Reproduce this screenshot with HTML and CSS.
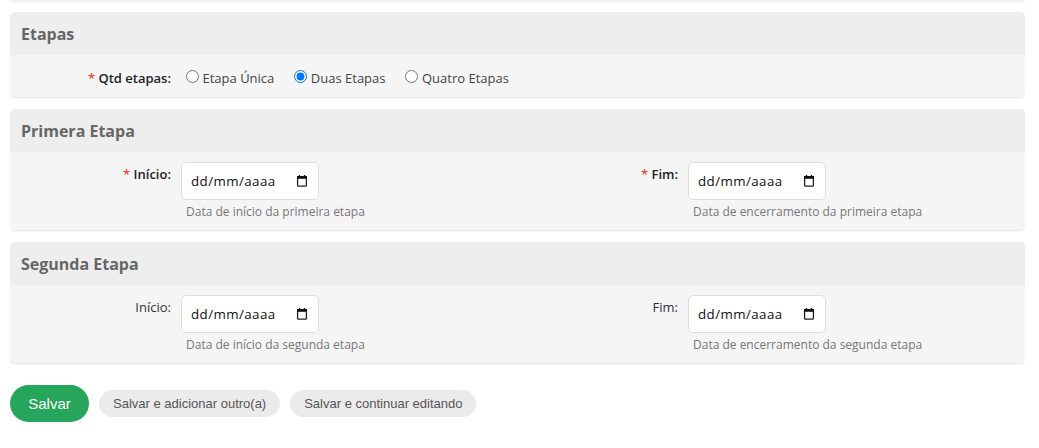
FILE: index.html
```html
<!DOCTYPE html>
<html lang="pt-BR">
<head>
<meta charset="utf-8">
<title>Etapas</title>
<link rel="stylesheet" href="styles.css">
</head>
<body>
<div class="sliver"></div>

<section class="card">
  <h2 class="card-title">Etapas</h2>
  <div class="card-body radio-body">
    <div class="field-label radio-label"><span class="req">*</span> <b>Qtd etapas:</b></div>
    <div class="radios">
      <label class="radio"><input type="radio" name="qtd">Etapa Única</label>
      <label class="radio"><input type="radio" name="qtd" checked>Duas Etapas</label>
      <label class="radio"><input type="radio" name="qtd">Quatro Etapas</label>
    </div>
  </div>
</section>

<section class="card">
  <h2 class="card-title">Primera Etapa</h2>
  <div class="card-body date-grid">
    <div class="field">
      <div class="field-label"><span class="req">*</span> <b>Início:</b></div>
      <div class="control">
        <div class="date-input"><span>dd/mm/aaaa</span><svg class="cal" viewBox="0 0 12 12" width="12" height="12"><path d="M3.5 0v2M8.5 0v2" stroke="#111" stroke-width="1.3" fill="none"/><rect x="1.6" y="1.6" width="8.8" height="9.6" rx="0.8" stroke="#222" stroke-width="1.3" fill="none"/><rect x="1" y="1" width="10" height="2.8" fill="#111"/></svg></div>
        <div class="help">Data de início da primeira etapa</div>
      </div>
    </div>
    <div class="field">
      <div class="field-label"><span class="req">*</span> <b>Fim:</b></div>
      <div class="control">
        <div class="date-input"><span>dd/mm/aaaa</span><svg class="cal" viewBox="0 0 12 12" width="12" height="12"><path d="M3.5 0v2M8.5 0v2" stroke="#111" stroke-width="1.3" fill="none"/><rect x="1.6" y="1.6" width="8.8" height="9.6" rx="0.8" stroke="#222" stroke-width="1.3" fill="none"/><rect x="1" y="1" width="10" height="2.8" fill="#111"/></svg></div>
        <div class="help">Data de encerramento da primeira etapa</div>
      </div>
    </div>
  </div>
</section>

<section class="card">
  <h2 class="card-title">Segunda Etapa</h2>
  <div class="card-body date-grid">
    <div class="field">
      <div class="field-label">Início:</div>
      <div class="control">
        <div class="date-input"><span>dd/mm/aaaa</span><svg class="cal" viewBox="0 0 12 12" width="12" height="12"><path d="M3.5 0v2M8.5 0v2" stroke="#111" stroke-width="1.3" fill="none"/><rect x="1.6" y="1.6" width="8.8" height="9.6" rx="0.8" stroke="#222" stroke-width="1.3" fill="none"/><rect x="1" y="1" width="10" height="2.8" fill="#111"/></svg></div>
        <div class="help">Data de início da segunda etapa</div>
      </div>
    </div>
    <div class="field">
      <div class="field-label">Fim:</div>
      <div class="control">
        <div class="date-input"><span>dd/mm/aaaa</span><svg class="cal" viewBox="0 0 12 12" width="12" height="12"><path d="M3.5 0v2M8.5 0v2" stroke="#111" stroke-width="1.3" fill="none"/><rect x="1.6" y="1.6" width="8.8" height="9.6" rx="0.8" stroke="#222" stroke-width="1.3" fill="none"/><rect x="1" y="1" width="10" height="2.8" fill="#111"/></svg></div>
        <div class="help">Data de encerramento da segunda etapa</div>
      </div>
    </div>
  </div>
</section>

<div class="actions">
  <button class="btn-primary" type="button">Salvar</button>
  <button class="btn-secondary" type="button">Salvar e adicionar outro(a)</button>
  <button class="btn-secondary" type="button">Salvar e continuar editando</button>
</div>
</body>
</html>
```

FILE: styles.css
```css
* { box-sizing: border-box; }
html, body { margin: 0; background: #fff; }
body {
  padding: 0 14px 0 10px;
  font-family: "Open Sans", "Noto Sans", sans-serif;
  font-size: 13px;
  color: #333;
  height: 448px;
  overflow: hidden;
}
.sliver {
  height: 2px;
  background: #f4f4f4;
  border-radius: 0 0 4px 4px;
  box-shadow: 0 1px 1px rgba(0, 0, 0, 0.04);
  margin-bottom: 10px;
}
.card {
  background: #f5f5f5;
  border-radius: 5px;
  border-bottom: 1px solid #ececec;
  box-shadow: 0 1px 1px rgba(0, 0, 0, 0.04);
  margin-bottom: 11px;
  overflow: hidden;
}
.card-title {
  margin: 0;
  height: 43px;
  padding: 0 11px;
  background: #eeeeee;
  font-size: 16px;
  font-weight: 700;
  line-height: 45px;
  color: #666;
}
.card-body { padding: 10px 0 0; }
.radio-body { display: flex; height: 42px; }
.field-label {
  width: 161px;
  text-align: right;
  padding-top: 3px;
  line-height: 18px;
  color: #333;
  flex: none;
}
.field-label b { font-weight: 600; color: #222; }
.radio-label { padding-top: 4px; }
.req { color: #e74c3c; font-weight: 600; }
.radios { display: flex; margin-left: 15px; gap: 20px; padding-top: 4px; }
.radio { display: flex; align-items: center; height: 18px; color: #444; }
.radio input { width: 13px; height: 13px; margin: 0 3.5px 3px 0; }
.date-grid { display: grid; grid-template-columns: 507px 1fr; height: 78px; }
.field { display: flex; gap: 10px; }
.date-input {
  width: 138px;
  height: 38px;
  background: #fff;
  border: 1px solid #ddd;
  border-radius: 5px;
  padding: 0 9px;
  display: flex;
  align-items: center;
  justify-content: space-between;
  font-size: 13.33px;
  letter-spacing: 0.42px;
  color: #111;
}
.cal { margin-right: 1px; }
.help { margin: 3px 0 0 5px; font-size: 12px; line-height: 18px; color: #777; }
.actions { display: flex; align-items: center; gap: 10px; padding-top: 10px; }
.btn-primary, .btn-secondary {
  border: 0;
  font-family: "Liberation Sans", Arial, sans-serif;
  cursor: pointer;
}
.btn-primary {
  width: 79px;
  height: 37px;
  border-radius: 19px;
  background: #26a65b;
  color: #fff;
  font-size: 15px;
}
.btn-secondary {
  height: 27px;
  padding: 0 14px;
  border-radius: 14px;
  background: #ebebeb;
  color: #555;
  font-size: 13px;
}
```
